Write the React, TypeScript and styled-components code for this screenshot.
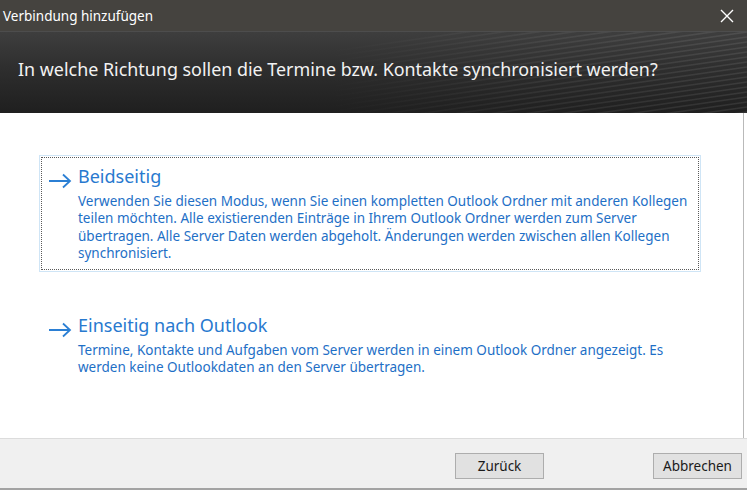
import React from "react";
import styled, { createGlobalStyle } from "styled-components";

const GlobalStyle = createGlobalStyle`
  html, body { margin: 0; padding: 0; background: #ffffff; }
  body { font-family: "Noto Sans", "Open Sans", sans-serif; }
  * { box-sizing: border-box; }
`;

const Window = styled.div`
  width: 747px;
  height: 490px;
  display: flex;
  flex-direction: column;
  background: #ffffff;
  overflow: hidden;
`;

const TitleBar = styled.div`
  height: 31px;
  flex: none;
  display: flex;
  align-items: center;
  justify-content: space-between;
  padding: 0 10px 0 3px;
  background: #45433f;
  color: #ffffff;
  font-size: 13.5px;
`;

const CloseButton = styled.div`
  width: 16px;
  height: 16px;
  display: flex;
  align-items: center;
  justify-content: center;
  margin-right: 2px;
`;

const Banner = styled.div`
  position: relative;
  height: 82px;
  flex: none;
  display: flex;
  align-items: center;
  padding: 0 0 8px 18px;
  background: linear-gradient(180deg, #3e3e3e 0%, #2e2e2e 45%, #1f1f1f 100%);
  border-top: 1px solid #4d4d4d;
  overflow: hidden;
`;

const Stripes = styled.svg`
  position: absolute;
  right: 0;
  top: 0;
  width: 420px;
  height: 82px;
  pointer-events: none;
`;

const Heading = styled.h1`
  position: relative;
  margin: 0;
  font-weight: 400;
  font-size: 17.9px;
  color: #f2f2f2;
`;

const Content = styled.div`
  flex: 1;
  display: flex;
  flex-direction: column;
  gap: 32px;
  padding: 42px 0 0 39px;
  border-right: 1px solid #b9b9b9;
  margin-right: 3px;
`;

const Option = styled.div<{ $focused?: boolean }>`
  width: 662px;
  padding: 1px;
  border: 1px solid ${(p) => (p.$focused ? "#cfe5f6" : "transparent")};
`;

const OptionInner = styled.div<{ $focused?: boolean }>`
  display: grid;
  grid-template-columns: 30px 1fr;
  padding: 5px 2px 6px 6px;
  border: 1px dotted ${(p) => (p.$focused ? "#5a5a5a" : "transparent")};
`;

const Arrow = styled.svg`
  width: 24px;
  height: 16px;
  margin-top: 10px;
`;

const OptionTitle = styled.div`
  font-size: 18px;
  color: #2879cf;
  line-height: 26px;
  margin-bottom: 4px;
`;

const OptionText = styled.div`
  grid-column: 2;
  font-size: 13.5px;
  line-height: 17.4px;
  color: #1e6fc6;
  white-space: nowrap;
`;

const Footer = styled.div`
  height: 52px;
  flex: none;
  display: flex;
  align-items: flex-start;
  justify-content: flex-end;
  gap: 109px;
  padding: 14px 5px 0 0;
  background: #f0f0f0;
  border-top: 1px solid #dcdcdc;
  border-bottom: 2px solid #a3a3a3;
`;

const Button = styled.button`
  width: 89px;
  height: 26px;
  background: #e1e1e1;
  border: 1px solid #adadad;
  font-family: "Noto Sans", "Open Sans", sans-serif;
  font-size: 13.5px;
  color: #1a1a1a;
  padding: 0;
`;

const ArrowIcon = () => (
  <Arrow viewBox="0 0 24 16">
    <path d="M1 8 H22 M15 1.5 L22 8 L15 14.5" fill="none" stroke="#2b7fd4" strokeWidth="1.8" />
  </Arrow>
);

const stripeLines = Array.from({ length: 26 }, (_, i) => i);

export default function App() {
  return (
    <>
      <GlobalStyle />
      <Window>
        <TitleBar>
          <span>Verbindung hinzufügen</span>
          <CloseButton>
            <svg width="14" height="14" viewBox="0 0 14 14">
              <path d="M1 1 L13 13 M13 1 L1 13" stroke="#ffffff" strokeWidth="1.4" />
            </svg>
          </CloseButton>
        </TitleBar>
        <Banner>
          <Stripes viewBox="0 0 420 82" preserveAspectRatio="none">
            <defs>
              <linearGradient id="fade" x1="0" y1="0" x2="1" y2="0">
                <stop offset="0" stopColor="#ffffff" stopOpacity="0" />
                <stop offset="0.5" stopColor="#ffffff" stopOpacity="0.06" />
                <stop offset="1" stopColor="#ffffff" stopOpacity="0.09" />
              </linearGradient>
            </defs>
            {stripeLines.map((i) => (
              <path
                key={i}
                d={`M0 ${i * 5 + 20} L420 ${i * 5 - 40}`}
                stroke="url(#fade)"
                strokeWidth="1.6"
                fill="none"
              />
            ))}
          </Stripes>
          <Heading>In welche Richtung sollen die Termine bzw. Kontakte synchronisiert werden?</Heading>
        </Banner>
        <Content>
          <Option $focused>
            <OptionInner $focused>
              <ArrowIcon />
              <OptionTitle>Beidseitig</OptionTitle>
              <OptionText>
                Verwenden Sie diesen Modus, wenn Sie einen kompletten Outlook Ordner mit anderen Kollegen
                <br />
                teilen möchten. Alle existierenden Einträge in Ihrem Outlook Ordner werden zum Server
                <br />
                übertragen. Alle Server Daten werden abgeholt. Änderungen werden zwischen allen Kollegen
                <br />
                synchronisiert.
              </OptionText>
            </OptionInner>
          </Option>
          <Option>
            <OptionInner>
              <ArrowIcon />
              <OptionTitle>Einseitig nach Outlook</OptionTitle>
              <OptionText>
                Termine, Kontakte und Aufgaben vom Server werden in einem Outlook Ordner angezeigt. Es
                <br />
                werden keine Outlookdaten an den Server übertragen.
              </OptionText>
            </OptionInner>
          </Option>
        </Content>
        <Footer>
          <Button>Zurück</Button>
          <Button>Abbrechen</Button>
        </Footer>
      </Window>
    </>
  );
}
